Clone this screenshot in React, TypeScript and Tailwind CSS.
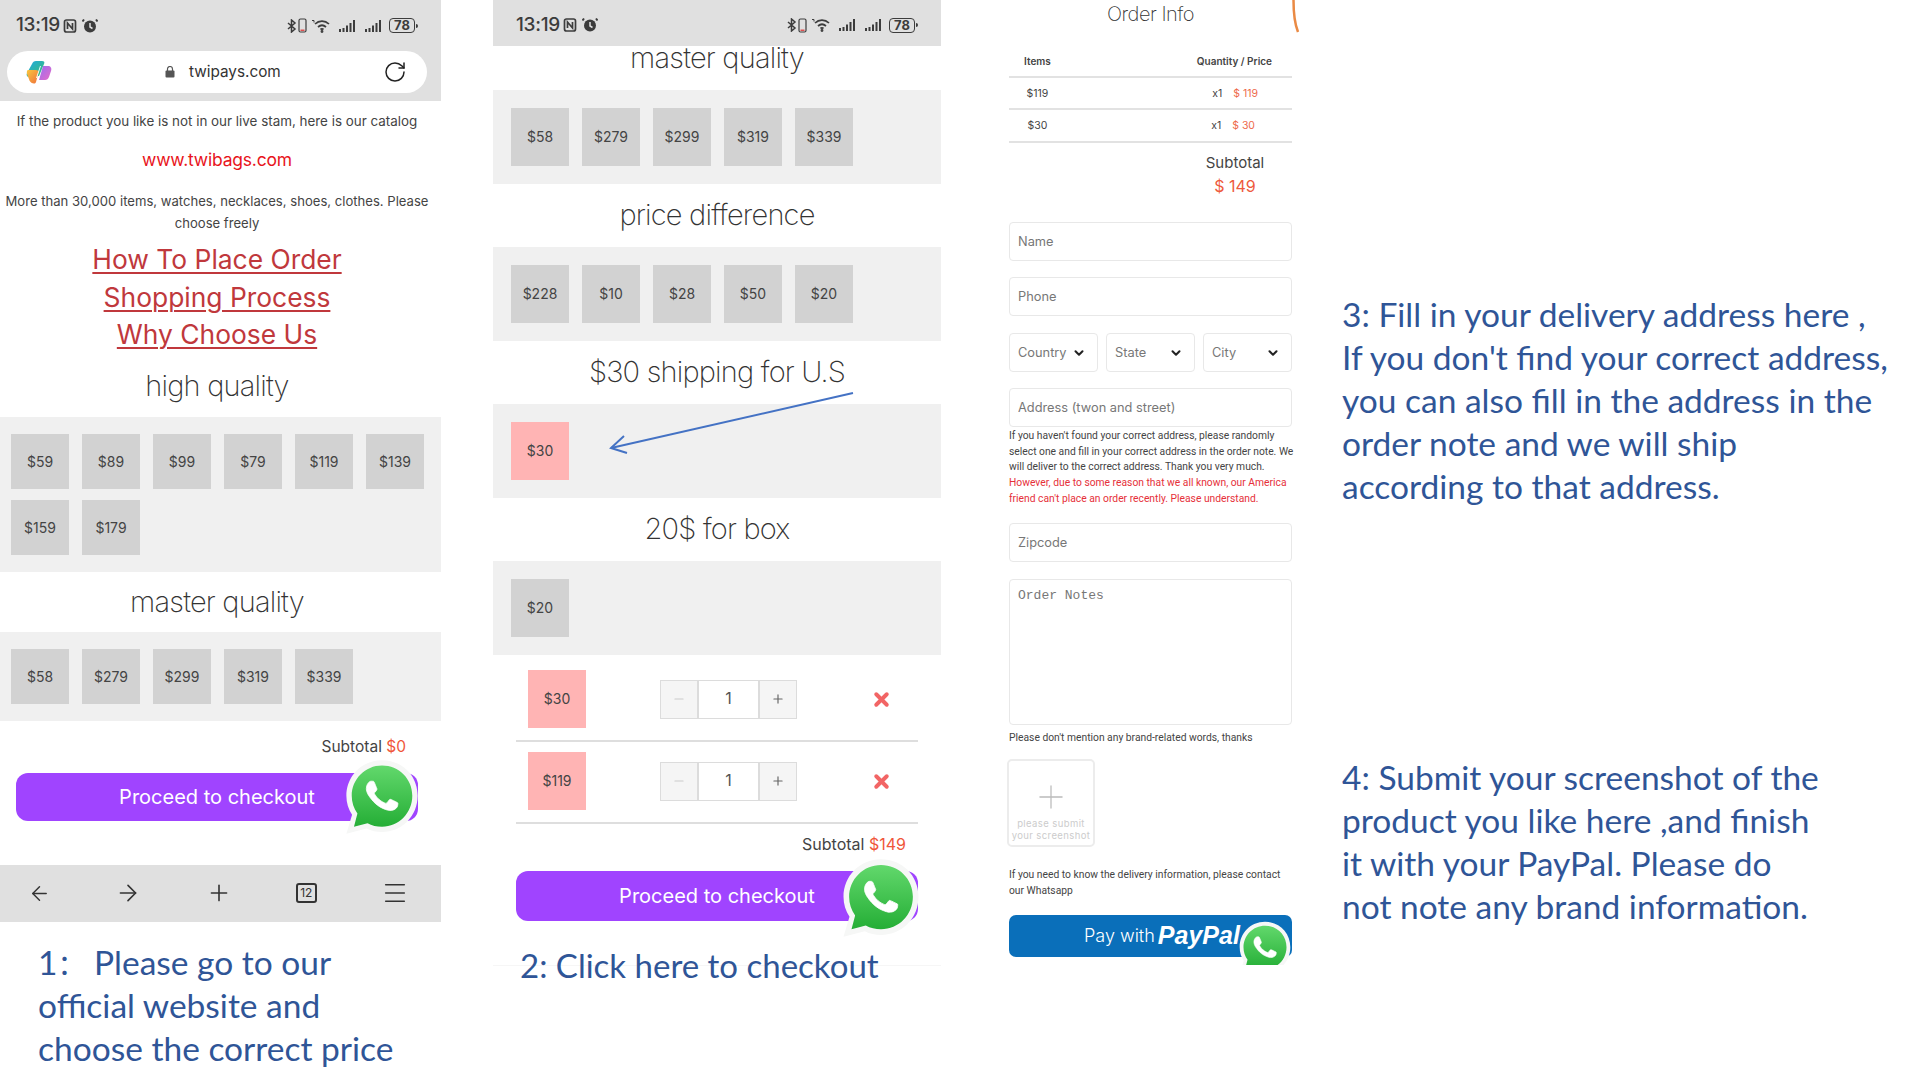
import type { ReactNode } from "react";
import { ArrowLeft, ArrowRight, ChevronDown, Menu, Plus, RotateCw, Minus, X } from "lucide-react";

function WhatsApp({ size, id }: { size: number; id: string }) {
  return (
    <svg width={size} height={size} viewBox="0 0 64 64" className="block">
      <defs>
        <linearGradient id={id} x1="0" y1="0" x2="0" y2="1">
          <stop offset="0" stopColor="#62d86c" />
          <stop offset="1" stopColor="#25ae36" />
        </linearGradient>
      </defs>
      <path d="M32 1C15 1 2 14.500 2 31c0 6 1.800 11.500 4.800 16L2 63l17-4.500C23 60.500 27.300 61.500 32 61.500 49 61.500 62 48 62 31S49 1 32 1z" fill="#f6f7f6" />
      <path d="M32 5.500C17.800 5.500 6.500 17 6.500 31c0 5.600 1.800 10.700 4.800 14.900L8.400 57l11.400-3C23.400 56 27.600 57 32 57c14.200 0 25.500-11.500 25.500-26S46.200 5.500 32 5.500z" fill={`url(#${id})`} />
      <g transform="translate(5.600 4.600) scale(2.2)">
        <path d="M17.472 14.382c-.297-.149-1.758-.867-2.03-.967-.273-.099-.471-.148-.67.15-.197.297-.767.966-.94 1.164-.173.199-.347.223-.644.075-.297-.15-1.255-.463-2.39-1.475-.883-.788-1.48-1.761-1.653-2.059-.173-.297-.018-.458.13-.606.134-.133.298-.347.446-.52.149-.174.198-.298.298-.497.099-.198.05-.371-.025-.52-.075-.149-.669-1.612-.916-2.207-.242-.579-.487-.5-.669-.51-.173-.008-.371-.01-.57-.01-.198 0-.52.074-.792.372-.272.297-1.04 1.016-1.04 2.479 0 1.462 1.065 2.875 1.213 3.074.149.198 2.096 3.2 5.077 4.487.709.306 1.262.489 1.694.625.712.227 1.36.195 1.871.118.571-.085 1.758-.719 2.006-1.413.248-.694.248-1.289.173-1.413-.074-.124-.272-.198-.57-.347z" fill="#fff" stroke="#fff" strokeWidth="0.300" />
      </g>
    </svg>
  );
}

function Signal() {
  return (
    <svg width="18" height="14" viewBox="0 0 18 14" fill="#3c3c3c">
      <rect x="0" y="10" width="2" height="3" />
      <rect x="3.500" y="9" width="2" height="4" />
      <rect x="7" y="6.500" width="2" height="6.500" />
      <rect x="10.500" y="4" width="2" height="9" />
      <rect x="14" y="1" width="2" height="12" />
    </svg>
  );
}

function StatusBar() {
  return (
    <div className="flex items-center w-[402px] h-[51px] font-['Inter',sans-serif] text-[#3c3c3c]">
      <span className="text-[19px] font-medium tracking-[-0.3px] w-[47px]">13:19</span>
      <svg width="14" height="14" viewBox="0 0 14 14" fill="none" stroke="#3c3c3c" strokeWidth="1.700">
        <rect x="1.500" y="1" width="11" height="12" rx="2" />
        <path d="M4.500 10V4l5 6V4" />
      </svg>
      <svg width="16" height="16" viewBox="0 0 16 16" className="ml-[5px]" fill="#3c3c3c">
        <circle cx="8" cy="8.500" r="6" />
        <path d="M2 1.500 0.500 3.500M14 1.500l1.500 2" stroke="#3c3c3c" strokeWidth="2" />
        <path d="M8 5v4l2.500 1.500" stroke="#e0e0e0" strokeWidth="1.500" fill="none" />
      </svg>
      <div className="ml-auto flex items-center">
        <svg width="10" height="14" viewBox="0 0 10 14" fill="none" stroke="#3c3c3c" strokeWidth="1.500">
          <path d="M1 4l7 6-3.500 3V1L8 4l-7 6" />
        </svg>
        <svg width="9" height="15" viewBox="0 0 9 15" fill="none" className="ml-[1px]">
          <rect x="1" y="1" width="7" height="13" rx="1.500" stroke="#3c3c3c" strokeWidth="1.200" />
          <rect x="2.500" y="11.500" width="4" height="1.500" fill="#e05050" />
        </svg>
        <svg width="21" height="14" viewBox="0 0 21 14" fill="none" stroke="#3c3c3c" strokeWidth="1.700" className="ml-[4px]">
          <path d="M4 5c4-3.800 10-3.800 14 0M7 8c2.500-2.200 5.500-2.200 8 0M9.500 10.500c1-.8 2-.8 3 0" />
          <circle cx="11" cy="12.500" r="0.600" fill="#3c3c3c" />
          <path d="M1 1.500h2v2" strokeWidth="1" />
        </svg>
        <span className="ml-[7px] flex"><Signal /></span>
        <span className="ml-[8px] flex"><Signal /></span>
        <span className="ml-[6px] h-[15px] w-[26px] rounded-[4px] border border-[#3c3c3c] flex items-center justify-center text-[13px] font-bold leading-none">78</span>
        <span className="ml-[1px] w-[2px] h-[4px] bg-[#3c3c3c] rounded-r" />
      </div>
    </div>
  );
}

function Copilot() {
  return (
    <svg width="26" height="24" viewBox="0 0 26 24">
      <defs>
        <linearGradient id="cp1" x1="0" y1="0" x2="1" y2="1">
          <stop offset="0" stopColor="#1fa8e8" />
          <stop offset="1" stopColor="#3ac06a" />
        </linearGradient>
        <linearGradient id="cp2" x1="0" y1="0" x2="1" y2="1">
          <stop offset="0" stopColor="#9a6df0" />
          <stop offset="1" stopColor="#e66bc8" />
        </linearGradient>
        <linearGradient id="cp3" x1="0" y1="0" x2="1" y2="1">
          <stop offset="0" stopColor="#f8c63c" />
          <stop offset="1" stopColor="#f0703c" />
        </linearGradient>
      </defs>
      <path d="M10 1h6c2 0 3 1 2 3l-5 12-10 1c-2 0-3-2-2-4L6 4c.8-2 2-3 4-3z" fill="url(#cp1)" />
      <path d="M17 6h5c2.500 0 4 2 3 5l-2 6c-.8 2-2 3-4 3h-6z" fill="url(#cp2)" />
      <path d="M2 10h8l3 1-3 11c-.5 1-1 1.500-2 1.500-2 0-3.500-1-4.500-3L1 14c-.5-2 0-4 1-4z" fill="url(#cp3)" />
      <path d="M15 6l-4 12h-1l4-12z" fill="#fff" opacity="0.9" />
    </svg>
  );
}

function Price({ label, pink = false, h = "h-[58px] pb-[2px]" }: { label: string; pink?: boolean; h?: string }) {
  return (
    <div className={`w-[58px] ${h} flex items-center justify-center text-[14px] text-[#444] ${pink ? "bg-[#ffb4b4]" : "bg-[#d2d2d2]"}`}>
      {label}
    </div>
  );
}

function Heading({ children, className = "" }: { children: string; className?: string }) {
  return (
    <div className={`h-[40px] flex items-center justify-center text-[29px] font-extralight tracking-[-0.8px] text-[#333] ${className}`}>
      {children}
    </div>
  );
}

function CheckoutButton({ id, wa, right, top }: { id: string; wa: number; right: string; top: string }) {
  return (
    <div className="relative flex items-center justify-center bg-[#a044ff] text-white text-[20px] h-full rounded-[12px]">
      Proceed to checkout
      <div className={`absolute ${right} ${top}`}>
        <WhatsApp size={wa} id={id} />
      </div>
    </div>
  );
}

function Stepper() {
  return (
    <div className="flex w-[137px] h-[39px] border border-[#dcdcdc] text-[#555]">
      <div className="w-[38px] bg-[#f5f5f5] border-r-2 border-[#dcdcdc] flex items-center justify-center text-[#ccc]"><Minus size={14} /></div>
      <div className="w-[59px] flex items-center justify-center text-[16px] pb-[2px]">1</div>
      <div className="flex-1 bg-[#f5f5f5] border-l-2 border-[#dcdcdc] flex items-center justify-center text-[#666]"><Plus size={14} /></div>
    </div>
  );
}

function CartRow({ label }: { label: string }) {
  return (
    <div className="flex items-center h-[82px] border-b-2 border-[#dedede] pb-[2px]">
      <div className="ml-[12px]"><Price label={label} pink /></div>
      <div className="ml-[74px]"><Stepper /></div>
      <X size={21} strokeWidth={4.500} className="ml-[74px] text-[#f26565]" />
    </div>
  );
}

function Input({ placeholder }: { placeholder: string }) {
  return (
    <input
      readOnly
      placeholder={placeholder}
      className="block w-full h-[39px] border border-[#e8e8e8] rounded-[4px] px-[8px] text-[12.800px] placeholder:text-[#777] outline-none"
    />
  );
}

function Select({ label }: { label: string }) {
  return (
    <div className="flex-1 h-[39px] border border-[#e8e8e8] rounded-[4px] pl-[8px] pr-[11px] flex items-center justify-between text-[12.800px] text-[#777]">
      {label}
      <ChevronDown size={14} strokeWidth={3.500} className="text-[#222]" />
    </div>
  );
}

function Steps({ lines, className = "" }: { lines: ReactNode[]; className?: string }) {
  return (
    <div className={`font-['Lato',sans-serif] text-[#2f5597] text-[33.500px] leading-[43px] whitespace-nowrap ${className}`}>
      {lines.map((l, i) => (
        <div key={i} className="h-[43px]">{l}</div>
      ))}
    </div>
  );
}

const note = "font-['Roboto',sans-serif] text-[10.300px] leading-[15.700px] text-[#444]";

export default function App() {
  return (
    <div className="relative flex h-[1080px] w-[1913px] overflow-hidden bg-white font-['Inter',sans-serif]">
      {/* Column 1 */}
      <div className="w-[441px] shrink-0">
        <div className="bg-[#e0e0e0] h-[101px] pl-[16px]">
          <StatusBar />
          <div className="-ml-[9px] w-[420px] h-[42px] bg-white rounded-[21px] flex items-center pl-[19px] pr-[20px]">
            <Copilot />
            <svg width="10" height="12" viewBox="0 0 10 12" className="ml-[113px]" fill="#555">
              <rect x="0.500" y="4.500" width="9" height="7" rx="1" />
              <path d="M2.500 5V3a2.500 2.500 0 015 0v2" fill="none" stroke="#555" strokeWidth="1.200" />
            </svg>
            <span className="ml-[14px] text-[15.300px] text-[#333]">twipays.com</span>
            <RotateCw size={24} strokeWidth={1.500} className="ml-auto text-[#222]" />
          </div>
        </div>
        <div className="pr-[7px]">
          <div className="mt-[8px] h-[24px] leading-[24px] text-center text-[13.400px] text-[#444] whitespace-nowrap">If the product you like is not in our live stam, here is our catalog</div>
          <div className="mt-[15px] h-[24px] leading-[24px] text-center text-[17.500px] text-[#e8141c] tracking-[-0.2px]">www.twibags.com</div>
          <div className="mt-[18px] text-center text-[13.100px] leading-[22px] text-[#444]">More than 30,000 items, watches, necklaces, shoes, clothes. Please choose freely</div>
          <div className="mt-[7px] text-center text-[26.400px] leading-[37.500px] text-[#c0383c] underline underline-offset-[3px] decoration-[2px]">
            <div>How To Place Order</div>
            <div>Shopping Process</div>
            <div>Why Choose Us</div>
          </div>
          <Heading className="mt-[12px]">high quality</Heading>
        </div>
        <div className="mt-[11px] bg-[#f0f0f0] pt-[17px] pb-[17px] pl-[11px] pr-[5px] flex flex-wrap gap-x-[13px] gap-y-[11px]">
          {["$59", "$89", "$99", "$79", "$119", "$139", "$159", "$179"].map((p) => (
            <Price key={p} label={p} h="h-[55px]" />
          ))}
        </div>
        <Heading className="mt-[10px] pr-[7px]">master quality</Heading>
        <div className="mt-[10px] bg-[#f0f0f0] py-[17px] pl-[11px] flex gap-[13px]">
          {["$58", "$279", "$299", "$319", "$339"].map((p) => (
            <Price key={p} label={p} h="h-[55px]" />
          ))}
        </div>
        <div className="mt-[16px] h-[20px] leading-[20px] text-right pr-[35px] text-[15.500px] text-[#444]">
          Subtotal <span className="text-[#f0563a]">$0</span>
        </div>
        <div className="mt-[16px] ml-[16px] w-[402px] h-[48px]">
          <CheckoutButton id="wa1" wa={76} right="-right-[2px]" top="-top-[14px]" />
        </div>
        <div className="mt-[44px] h-[57px] bg-[#e0e0e0] flex items-center justify-between pl-[28px] pr-[32px] text-[#333]">
          <ArrowLeft size={23} strokeWidth={1.500} />
          <ArrowRight size={26} strokeWidth={1.500} />
          <Plus size={26} strokeWidth={1.500} />
          <div className="w-[21px] h-[20px] border-2 border-[#333] rounded-[3px] flex items-center justify-center text-[12px] leading-none">12</div>
          <Menu size={28} strokeWidth={1.300} />
        </div>
        <Steps
          className="mt-[19px] ml-[38px]"
          lines={[
            <>1<span className="text-[28px] leading-none font-['Noto_Sans_CJK_SC',sans-serif]">：</span> Please go to our</>,
            "official website and",
            "choose the correct price",
          ]}
        />
      </div>

      {/* Column 2 */}
      <div className="ml-[52px] w-[448px] shrink-0">
        <div className="bg-[#e0e0e0] h-[46px] pl-[23px] pt-[4px] flex items-center"><StatusBar /></div>
        <Heading className="-mt-[8px]">master quality</Heading>
        <div className="mt-[12px] bg-[#f0f0f0] py-[18px] pl-[18px] flex gap-[13px]">
          {["$58", "$279", "$299", "$319", "$339"].map((p) => <Price key={p} label={p} />)}
        </div>
        <Heading className="mt-[11px]">price difference</Heading>
        <div className="mt-[12px] bg-[#f0f0f0] py-[18px] pl-[18px] flex gap-[13px]">
          {["$228", "$10", "$28", "$50", "$20"].map((p) => <Price key={p} label={p} />)}
        </div>
        <Heading className="mt-[11px]">$30 shipping for U.S</Heading>
        <div className="mt-[12px] bg-[#f0f0f0] py-[18px] pl-[18px]"><Price label="$30" pink /></div>
        <Heading className="mt-[11px]">20$ for box</Heading>
        <div className="mt-[12px] bg-[#f0f0f0] py-[18px] pl-[18px]"><Price label="$20" /></div>
        <div className="mx-[23px] mt-[5px]">
          <CartRow label="$30" />
          <CartRow label="$119" />
          <div className="mt-[9px] h-[22px] leading-[22px] text-right pr-[12px] text-[16px] text-[#444]">
            Subtotal <span className="text-[#f0563a]">$149</span>
          </div>
          <div className="mt-[16px] h-[50px]">
            <CheckoutButton id="wa2" wa={80} right="-right-[3px]" top="-top-[13px]" />
          </div>
        </div>
        <div className="mt-[23px] border-b border-[#f6f6f6] h-[22px]">
          <Steps className="ml-[27px]" lines={[<span className="text-[33px]">2: Click here to checkout</span>]} />
        </div>
      </div>

      {/* Column 3 */}
      <div className="ml-[68px] w-[283px] shrink-0 relative">
        <div className="h-[28px] leading-[28px] text-center text-[20px] font-extralight tracking-[-0.5px] text-[#333]">Order Info</div>
        <div className="mt-[21px] h-[29px] pb-[2px] flex items-center text-[10px] font-semibold text-[#444] border-b-2 border-[#e2e2e2]">
          <div className="w-[57px] text-center">Items</div>
          <div className="w-[206px] text-right">Quantity / Price</div>
        </div>
        <div className="h-[32px] pt-[1px] flex items-center text-[10.500px] text-[#444] border-b-2 border-[#e2e2e2]">
          <div className="w-[57px] text-center">$119</div>
          <div className="w-[192px] text-right">x1 <span className="ml-[8px] text-[#ee6a4c]">$ 119</span></div>
        </div>
        <div className="h-[33px] pt-[1px] flex items-center text-[10.500px] text-[#444] border-b-2 border-[#e2e2e2]">
          <div className="w-[57px] text-center">$30</div>
          <div className="w-[189px] text-right">x1 <span className="ml-[8px] text-[#ee6a4c]">$ 30</span></div>
        </div>
        <div className="ml-[166px] w-[120px] text-center mt-[9px] text-[15px] leading-[22px] text-[#444]">Subtotal</div>
        <div className="ml-[166px] w-[120px] text-center mt-[1px] text-[16px] leading-[22px] text-[#ee5a3c]">$ 149</div>
        <div className="mt-[25px]"><Input placeholder="Name" /></div>
        <div className="mt-[16px]"><Input placeholder="Phone" /></div>
        <div className="mt-[17px] flex gap-[8px]">
          <Select label="Country" />
          <Select label="State" />
          <Select label="City" />
        </div>
        <div className="mt-[16px]"><Input placeholder="Address (twon and street)" /></div>
        <div className={`mt-[1px] -mr-[8px] ${note}`}>
          If you haven't found your correct address, please randomly select one and fill in your correct address in the order note. We will deliver to the correct address. Thank you very much.
          <div className="text-[#e6303a] mr-[8px]">However, due to some reason that we all known, our America friend can't place an order recently. Please understand.</div>
        </div>
        <div className="mt-[16px]"><Input placeholder="Zipcode" /></div>
        <textarea
          readOnly
          placeholder="Order Notes"
          className="mt-[17px] block w-full h-[146px] border border-[#e8e8e8] rounded-[4px] px-[8px] py-[6px] text-[13px] font-['Liberation_Mono',monospace] placeholder:text-[#777] outline-none resize-none"
        />
        <div className={`mt-[5px] whitespace-nowrap ${note}`}>Please don't mention any brand-related words, thanks</div>
        <div className="relative -ml-[2px] mt-[14px] w-[88px] h-[88px] border-2 border-[#ececec] rounded-[5px] text-center">
          <Plus size={38} strokeWidth={0.800} className="absolute left-[23px] top-[17px] text-[#bbb]" />
          <div className="pt-[57px] text-[9.500px] leading-[12px] tracking-[0.4px] text-[#ccc]">please submit<br />your screenshot</div>
        </div>
        <div className={`mt-[20px] ${note}`}>If you need to know the delivery information, please contact our Whatsapp</div>
        <div className="relative mt-[16px] h-[42px] bg-[#0a6fba] rounded-[7px] text-white flex items-center pl-[75px]">
          <span className="text-[18px] font-light">Pay with</span>
          <span className="ml-[3px] text-[25px] font-bold italic font-['Liberation_Sans',sans-serif]">PayPal</span>
          <div className="absolute right-0 top-[6px] h-[44px] overflow-hidden">
            <WhatsApp size={54} id="wa3" />
          </div>
        </div>
        <svg width="8" height="34" viewBox="0 0 8 34" className="absolute left-[283px] top-0" fill="none">
          <path d="M1.500 0c0 10 .5 22 4.500 32" stroke="#ea8a44" strokeWidth="2.500" />
        </svg>
      </div>

      {/* Column 4 */}
      <div className="ml-[50px] pt-[293px]">
        <Steps lines={["3: Fill in your delivery address here ,", "If you don't find your correct address,", "you can also fill in the address in the", "order note and we will ship", "according to that address."]} />
        <Steps className="mt-[248px]" lines={["4: Submit your screenshot of the", "product you like here ,and finish", "it with your PayPal. Please do", "not note any brand information."]} />
      </div>

      {/* Annotation arrow */}
      <svg width="260" height="70" viewBox="0 0 260 70" className="absolute left-[600px] top-[388px]" fill="none" stroke="#4472c4" strokeWidth="2">
        <path d="M253 5L11 60" />
        <path d="M24 48L11 60l16 5" />
      </svg>
    </div>
  );
}
